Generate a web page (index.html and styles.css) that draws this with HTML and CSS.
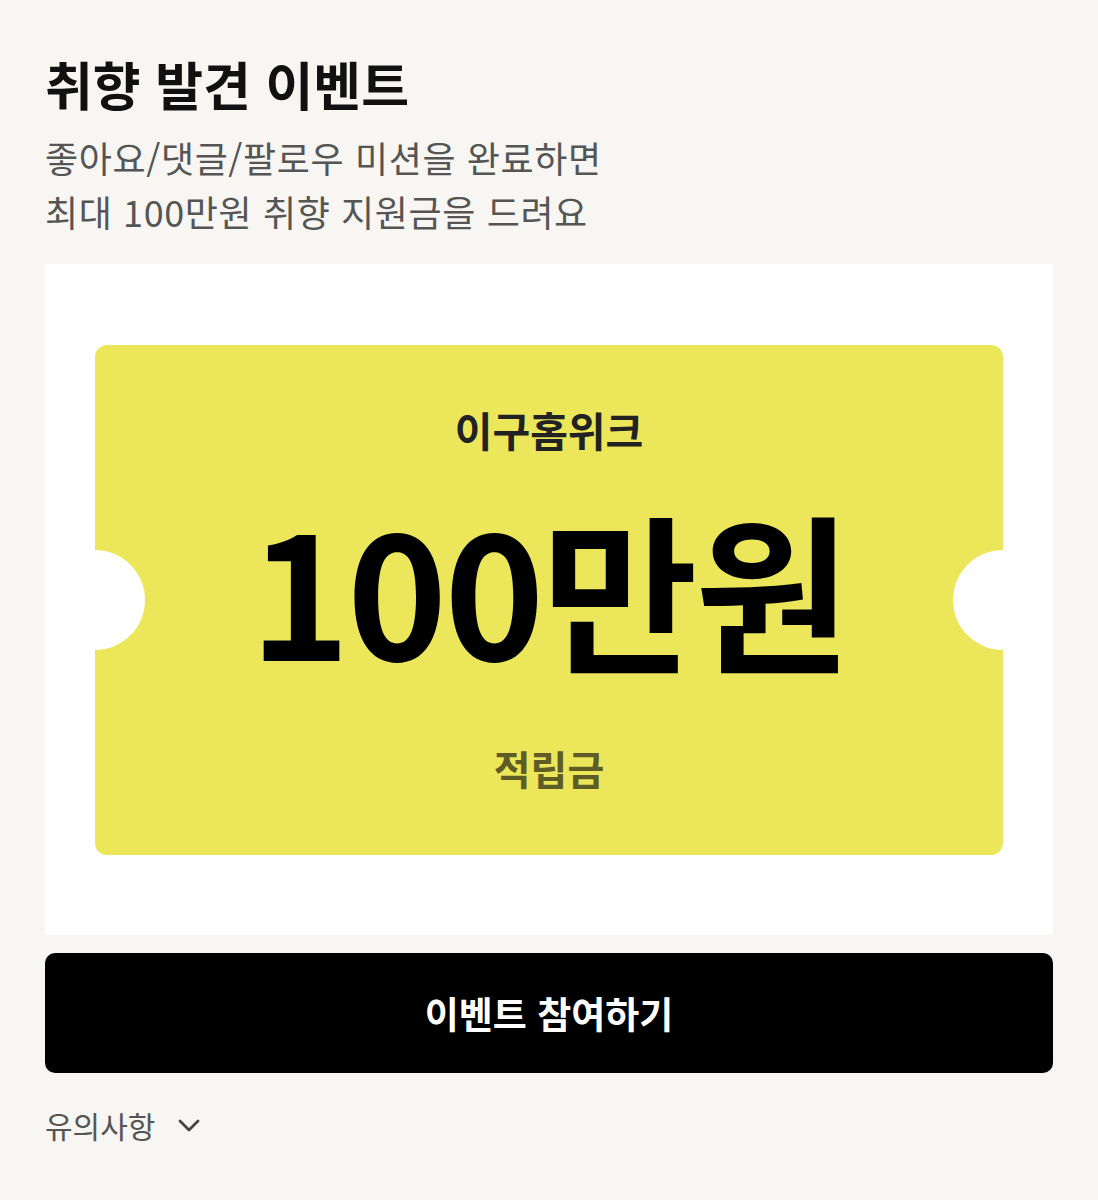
FILE: index.html
```html
<!DOCTYPE html>
<html lang="ko">

<head>
	<meta charset="UTF-8">
	<title>취향 발견 이벤트</title>
	<link rel="stylesheet" href="styles.css">
</head>

<body>
	<div id="page">
		<h1 class="title">취향 발견 이벤트</h1>
		<p class="desc">좋아요/댓글/팔로우 미션을 완료하면<br>최대 100만원 취향 지원금을 드려요</p>

		<div class="card">
			<div class="ticket">
				<p class="brand">이구홈위크</p>
				<p class="amount">100만원</p>
				<p class="kind">적립금</p>
			</div>
		</div>

		<a href="javascript:;" class="join">이벤트 참여하기</a>

		<div class="notice">
			<span>유의사항</span>
			<svg width="28" height="28" viewBox="0 0 28 28" fill="none">
				<path d="M5 10 L14 19 L23 10" stroke="#444" stroke-width="2.8" stroke-linecap="round" stroke-linejoin="round" />
			</svg>
		</div>
	</div>
</body>

</html>
```

FILE: styles.css
```css
html,
body {
	margin: 0;
	padding: 0;
}

body {
	background: #f7f6f2;
	font-family: "Noto Sans CJK KR", "Noto Sans", sans-serif;
	color: #111;
}

p,
h1 {
	margin: 0;
}

#page {
	padding: 46px 45px 0;
}

.title {
	font-size: 52px;
	line-height: 76px;
	font-weight: 700;
	letter-spacing: 0;
}

.desc {
	margin-top: 8px;
	font-size: 36px;
	line-height: 54px;
	color: #555;
	letter-spacing: 0.6px;
}

.card {
	margin-top: 26px;
	background: #fff;
	padding: 81px 50px 80px;
}

.ticket {
	position: relative;
	height: 510px;
	background: #ece75a;
	border-radius: 12px;
	display: flex;
	flex-direction: column;
	align-items: center;
}

.ticket::before,
.ticket::after {
	content: "";
	position: absolute;
	top: 205px;
	width: 100px;
	height: 100px;
	border-radius: 50%;
	background: #fff;
}

.ticket::before {
	left: -50px;
}

.ticket::after {
	right: -50px;
}

.brand {
	margin-top: 56px;
	font-size: 41px;
	line-height: 56px;
	font-weight: 700;
	color: #222;
}

.amount {
	margin-top: 30px;
	font-size: 170px;
	line-height: 200px;
	font-weight: 700;
	letter-spacing: -3px;
	color: #000;
}

.kind {
	margin-top: 53px;
	font-size: 40px;
	line-height: 56px;
	font-weight: 700;
	color: #5f5d26;
}

.join {
	margin-top: 18px;
	display: flex;
	align-items: center;
	justify-content: center;
	height: 120px;
	background: #000;
	border-radius: 10px;
	color: #fff;
	text-decoration: none;
	font-size: 37px;
	font-weight: 700;
}

.notice {
	margin-top: 30px;
	display: flex;
	align-items: center;
	gap: 20px;
	font-size: 30px;
	line-height: 44px;
	color: #555;
}
```
